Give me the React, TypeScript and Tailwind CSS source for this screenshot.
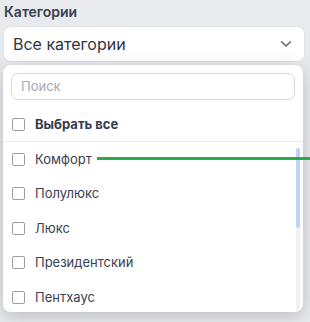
import React from "react";

const items = ["Комфорт", "Полулюкс", "Люкс", "Президентский", "Пентхаус"];

function Box() {
  return <span className="block w-[13px] h-[13px] rounded-[2px] border-[1.5px] border-[#9c9ca3] bg-white shrink-0" />;
}

export default function App() {
  return (
    <div className="w-[310px] h-[322px] bg-[#e9eaee] relative overflow-hidden font-['Inter',sans-serif]">
      <div className="pl-[3px] pt-[2px]">
        <div className="pl-[1px] text-[14px] leading-[20px] font-semibold text-[#3b404e]">Категории</div>
        <div className="mt-[4px] w-[302px] h-[36px] bg-white rounded-[8px] border border-[#e1e2e7] flex items-center justify-between pl-[9px] pr-[12px]">
          <span className="text-[16px] text-[#2f3442]">Все категории</span>
          <svg width="12" height="8" viewBox="0 0 12 8" fill="none">
            <path d="M1.5 1.8 L6 6 L10.5 1.8" stroke="#5a5f6c" strokeWidth="1.4" strokeLinecap="round" strokeLinejoin="round" />
          </svg>
        </div>
        <div className="mt-[3px] w-[300px] h-[247px] bg-white rounded-[8px] shadow-[0_4px_18px_rgba(0,0,0,0.2)] flex flex-col overflow-hidden">
          <div className="px-[8px] pt-[8px]">
            <div className="h-[27px] rounded-[7px] border border-[#d6d6dc] flex items-center pl-[9px] text-[13px] text-[#a5a8b1]">Поиск</div>
          </div>
          <div className="h-[42px] flex items-end pb-[10px] pl-[9px] gap-[10px] border-b border-[#ececf0] shrink-0">
            <Box />
            <span className="text-[13px] leading-[13px] font-bold text-[#363c4d]">Выбрать все</span>
          </div>
          <div className="relative flex-1">
            <div className="flex flex-col">
              {items.map((t) => (
                <div key={t} className="h-[34.5px] shrink-0 flex items-center pl-[9px] gap-[10px]">
                  <Box />
                  <span className="text-[13px] text-[#3a4052]">{t}</span>
                </div>
              ))}
            </div>
            <div className="absolute right-[3px] top-[6px] bottom-[4px] w-[4px] rounded-full bg-[#f1f1f6]">
              <div className="h-[80px] w-full rounded-full bg-[#bcd4f6]" />
            </div>
          </div>
        </div>
      </div>
      <div className="absolute left-[97px] top-[157px] w-[213px] h-[3px] bg-[#2eaa4b]" />
    </div>
  );
}
